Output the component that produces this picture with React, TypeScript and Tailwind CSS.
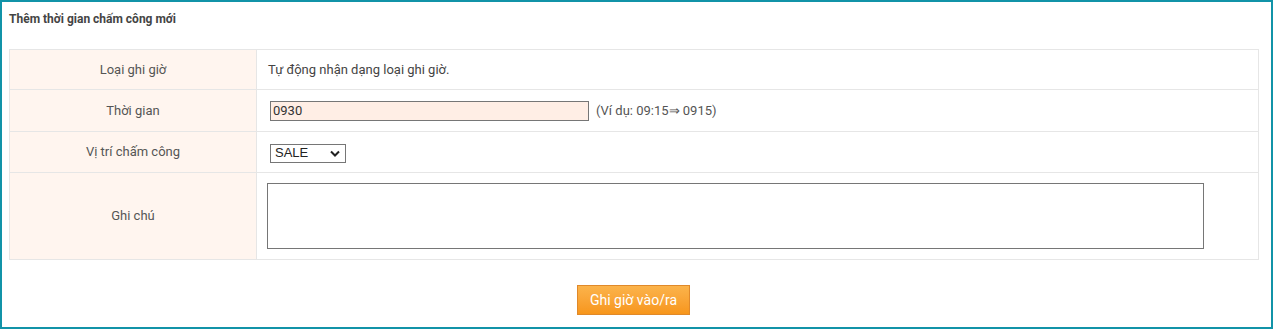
import React from 'react';

const font = { fontFamily: 'Roboto, "Noto Sans", sans-serif' };

const App: React.FC = () => {
  return (
    <div className="w-[1273px] h-[329px] border-2 border-[#1193a8] bg-white text-[13px] text-[#444]" style={font}>
      <div className="pl-[7px] pt-[10px] text-[12px] font-bold text-[#444] leading-[14px]">Thêm thời gian chấm công mới</div>
      <div className="ml-[7px] mt-[23px] w-[1250px] border border-[#e6e6e6]">
        <div className="grid grid-cols-[247px_1fr] h-[40px] border-b border-[#e6e6e6]">
          <div className="bg-[#fff5ef] border-r border-[#e6e6e6] flex items-center justify-center text-[#555]">Loại ghi giờ</div>
          <div className="flex items-center pl-[11px]">Tự động nhận dạng loại ghi giờ.</div>
        </div>
        <div className="grid grid-cols-[247px_1fr] h-[42px] border-b border-[#e6e6e6]">
          <div className="bg-[#fff5ef] border-r border-[#e6e6e6] flex items-center justify-center text-[#555]">Thời gian</div>
          <div className="flex items-center pl-[13px] gap-[7px]">
            <input defaultValue="0930" className="w-[319px] h-[20px] border border-[#767676] bg-[#ffeee5] px-[2px] text-[13px] text-[#333] outline-none" style={font} />
            <span className="text-[#555]">(Ví dụ: 09:15⇒ 0915)</span>
          </div>
        </div>
        <div className="grid grid-cols-[247px_1fr] h-[41px] border-b border-[#e6e6e6]">
          <div className="bg-[#fff5ef] border-r border-[#e6e6e6] flex items-center justify-center text-[#555]">Vị trí chấm công</div>
          <div className="flex items-center pl-[13px] pt-[2px]">
            <div className="w-[76px] h-[19px] border border-[#767676] bg-white flex items-center justify-between pl-[4px] pr-[5px] text-[13px] text-[#222]" style={{ fontFamily: '"Liberation Sans", Arial, sans-serif' }}>
              <span>SALE</span>
              <svg width="10" height="7" viewBox="0 0 10 7"><path d="M1 1.5 L5 5.5 L9 1.5" stroke="#222" strokeWidth="2" fill="none" /></svg>
            </div>
          </div>
        </div>
        <div className="grid grid-cols-[247px_1fr] h-[86px]">
          <div className="bg-[#fff5ef] border-r border-[#e6e6e6] flex items-center justify-center text-[#555]">Ghi chú</div>
          <div className="flex items-center pl-[10px]">
            <textarea className="w-[937px] h-[66px] border border-[#767676] bg-white resize-none outline-none" />
          </div>
        </div>
      </div>
      <div className="flex justify-center mt-[25px] pr-[6px]">
        <button className="w-[113px] h-[30px] border border-[#e0892a] bg-gradient-to-b from-[#fbb34a] to-[#f7961a] text-white text-[14px]" style={font}>Ghi giờ vào/ra</button>
      </div>
    </div>
  );
};

export default App;
